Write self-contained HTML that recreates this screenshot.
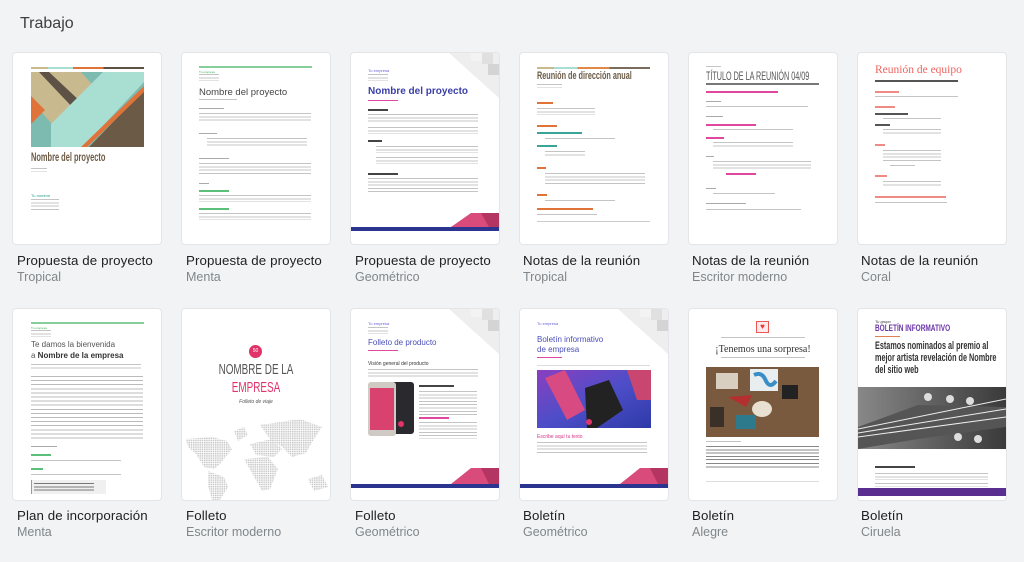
<!DOCTYPE html>
<html><head><meta charset="utf-8">
<style>
*{margin:0;padding:0;box-sizing:border-box}
body{width:1024px;height:562px;background:#f1f3f4;font-family:"Liberation Sans",sans-serif;position:relative;overflow:hidden}
.h{position:absolute;left:20px;top:15px;font-size:16px;color:#3c4043}
.c{position:absolute;width:148px;height:191px;background:#fff;border-radius:3px;box-shadow:0 0 0 1px #e3e5e8;overflow:hidden}
.c>*{position:absolute}
.t{position:absolute;font-size:13.3px;color:#202124;white-space:nowrap;letter-spacing:.1px}
.s{position:absolute;font-size:12.5px;color:#80868b;white-space:nowrap}
.p{background:repeating-linear-gradient(#c4c4c4 0 1px,transparent 1px 3.3px)}
.q{background:repeating-linear-gradient(#aaa 0 1px,transparent 1px 3.3px)}
.n{font-weight:bold;transform-origin:0 0;white-space:nowrap}
.x{font-size:3px;white-space:nowrap}
</style></head><body>
<div class="h">Trabajo</div>

<!-- Row 1 -->
<div class="c" style="left:13px;top:53px">
 <div style="left:18px;top:14px;width:113px;height:2px;background:linear-gradient(90deg,#c9b98f 0 15%,#a9dfd3 15% 37%,#e0733a 37% 64%,#5e5247 64%)"></div>
 <svg style="left:18px;top:19px" width="113" height="75" viewBox="0 0 113 75">
  <rect width="113" height="75" fill="#7dbab0"/>
  <polygon points="0,0 50,0 75,28 28,60 0,28" fill="#c9b98f"/>
  <polygon points="8,0 18,0 52,32 44,38" fill="#5e5247"/>
  <polygon points="0,24 14,38 0,52" fill="#e0733a"/>
  <polygon points="113,0 113,10 52,75 20,75 20,52 72,0" fill="#a9dfd3"/>
  <polygon points="113,18 113,75 58,75" fill="#6b5a45"/>
  <polygon points="113,14 113,20 56,75 50,75" fill="#e0733a"/>
 </svg>
 <div class="n" style="left:18px;top:97px;font-size:12px;color:#6b5a45;transform:scaleX(.62)">Nombre del proyecto</div>
 <div class="p" style="left:18px;top:115px;width:16px;height:4px"></div>
 <div class="x" style="left:18px;top:140px;color:#2aa08e;font-size:4px">Tu nombre</div>
 <div class="p" style="left:18px;top:146px;width:28px;height:11px"></div>
</div>

<div class="c" style="left:182px;top:53px">
 <div style="left:17px;top:13px;width:113px;height:2px;background:#86cf9b"></div>
 <div class="x" style="left:17px;top:17px;color:#3cb45a">Tu empresa</div>
 <div class="p" style="left:17px;top:21px;width:20px;height:7px"></div>
 <div style="left:17px;top:34px;font-size:9.5px;color:#444">Nombre del proyecto</div>
 <div class="p" style="left:17px;top:46px;width:38px;height:2px"></div>
 <div class="q" style="left:17px;top:55px;width:25px;height:2px"></div>
 <div class="p" style="left:17px;top:60px;width:112px;height:10px"></div>
 <div class="q" style="left:17px;top:80px;width:18px;height:2px"></div>
 <div class="p" style="left:25px;top:85px;width:100px;height:10px"></div>
 <div class="q" style="left:17px;top:105px;width:30px;height:2px"></div>
 <div class="p" style="left:17px;top:110px;width:112px;height:13px"></div>
 <div class="q" style="left:17px;top:130px;width:10px;height:2px"></div>
 <div style="left:17px;top:137px;width:30px;height:2px;background:#5cc07a"></div>
 <div class="p" style="left:17px;top:142px;width:112px;height:7px"></div>
 <div style="left:17px;top:155px;width:30px;height:2px;background:#5cc07a"></div>
 <div class="p" style="left:17px;top:160px;width:112px;height:7px"></div>
</div>

<div class="c" style="left:351px;top:53px">
 <svg style="left:98px;top:0" width="50" height="45"><polygon points="0,0 50,0 50,45" fill="#eeeeee"/><rect x="33" y="0" width="11" height="11" fill="#e0e0e0"/><rect x="39" y="11" width="11" height="11" fill="#d4d4d4"/><rect x="22" y="0" width="11" height="8" fill="#f3f3f3"/></svg>
 <div class="x" style="left:17px;top:15px;color:#6a5fd8;font-size:4px">Tu empresa</div>
 <div class="p" style="left:17px;top:21px;width:20px;height:7px"></div>
 <div style="left:17px;top:33px;font-size:10px;font-weight:bold;color:#3a3fa8">Nombre del proyecto</div>
 <div style="left:17px;top:47px;width:30px;height:1px;background:#e0479e"></div>
 <div class="q" style="left:17px;top:56px;width:20px;height:2px;background:#444"></div>
 <div class="p" style="left:17px;top:61px;width:110px;height:10px"></div>
 <div class="p" style="left:17px;top:74px;width:110px;height:7px"></div>
 <div style="left:17px;top:87px;width:14px;height:2px;background:#444"></div>
 <div class="p" style="left:25px;top:93px;width:102px;height:7px"></div>
 <div class="p" style="left:25px;top:104px;width:102px;height:7px"></div>
 <div style="left:17px;top:120px;width:30px;height:2px;background:#444"></div>
 <div class="p" style="left:17px;top:125px;width:110px;height:14px"></div>
 <svg style="left:0;top:160px" width="148" height="31"><polygon points="100,14 120,0 148,0 148,14" fill="#d94b7a"/><polygon points="130,0 148,0 148,14 138,14" fill="#b43562"/><rect x="0" y="14" width="148" height="4" fill="#2b3590"/></svg>
</div>

<div class="c" style="left:520px;top:53px">
 <div style="left:17px;top:14px;width:113px;height:2px;background:linear-gradient(90deg,#c9b98f 0 15%,#a9dfd3 15% 36%,#e0874a 36% 64%,#7a6c5c 64%)"></div>
 <div class="n" style="left:17px;top:17px;font-size:11px;color:#6b5a45;transform:scaleX(.66)">Reunión de dirección anual</div>
 <div class="p" style="left:17px;top:31px;width:25px;height:4px"></div>
 <div style="left:17px;top:49px;width:16px;height:2px;background:#e0733a"></div>
 <div class="p" style="left:17px;top:55px;width:58px;height:7px"></div>
 <div style="left:17px;top:72px;width:20px;height:2px;background:#e0733a"></div>
 <div style="left:17px;top:79px;width:45px;height:2px;background:#3aa596"></div>
 <div class="p" style="left:25px;top:85px;width:70px;height:2px"></div>
 <div style="left:17px;top:92px;width:20px;height:2px;background:#3aa596"></div>
 <div class="p" style="left:25px;top:98px;width:40px;height:6px"></div>
 <div style="left:17px;top:114px;width:9px;height:2px;background:#e0733a"></div>
 <div class="p" style="left:25px;top:120px;width:100px;height:12px"></div>
 <div style="left:17px;top:141px;width:10px;height:2px;background:#e0733a"></div>
 <div class="p" style="left:25px;top:147px;width:70px;height:2px"></div>
 <div style="left:17px;top:155px;width:56px;height:2px;background:#e0733a"></div>
 <div class="p" style="left:17px;top:161px;width:60px;height:2px"></div>
 <div style="left:17px;top:168px;width:113px;height:1px;background:#ccc"></div>
</div>

<div class="c" style="left:689px;top:53px">
 <div class="p" style="left:17px;top:13px;width:15px;height:2px"></div>
 <div class="n" style="left:17px;top:16px;font-size:12px;color:#555;font-weight:normal;transform:scaleX(.6)">TÍTULO DE LA REUNIÓN 04/09</div>
 <div style="left:17px;top:30px;width:113px;height:2px;background:#777"></div>
 <div style="left:17px;top:38px;width:72px;height:2px;background:#e0479e"></div>
 <div class="q" style="left:17px;top:48px;width:15px;height:2px"></div>
 <div class="p" style="left:17px;top:53px;width:102px;height:2px"></div>
 <div class="q" style="left:17px;top:63px;width:17px;height:2px"></div>
 <div style="left:17px;top:71px;width:50px;height:2px;background:#e0479e"></div>
 <div class="p" style="left:24px;top:76px;width:80px;height:2px"></div>
 <div style="left:17px;top:84px;width:18px;height:2px;background:#e0479e"></div>
 <div class="p" style="left:24px;top:89px;width:80px;height:6px"></div>
 <div class="q" style="left:17px;top:103px;width:8px;height:2px"></div>
 <div class="p" style="left:24px;top:108px;width:98px;height:9px"></div>
 <div style="left:37px;top:120px;width:30px;height:2px;background:#e0479e"></div>
 <div class="q" style="left:17px;top:135px;width:10px;height:2px"></div>
 <div class="p" style="left:24px;top:140px;width:62px;height:2px"></div>
 <div class="q" style="left:17px;top:150px;width:40px;height:2px"></div>
 <div class="p" style="left:17px;top:156px;width:95px;height:2px"></div>
</div>

<div class="c" style="left:858px;top:53px">
 <div style="left:17px;top:11px;font-family:'Liberation Serif',serif;font-size:11.5px;color:#ef6461">Reunión de equipo</div>
 <div style="left:17px;top:27px;width:83px;height:2px;background:#555"></div>
 <div style="left:17px;top:38px;width:24px;height:2px;background:#ef8a85"></div>
 <div class="p" style="left:17px;top:43px;width:83px;height:2px"></div>
 <div style="left:17px;top:53px;width:20px;height:2px;background:#ef8a85"></div>
 <div style="left:17px;top:60px;width:33px;height:2px;background:#555"></div>
 <div class="p" style="left:25px;top:65px;width:58px;height:2px"></div>
 <div style="left:17px;top:71px;width:15px;height:2px;background:#555"></div>
 <div class="p" style="left:25px;top:76px;width:58px;height:6px"></div>
 <div style="left:17px;top:91px;width:10px;height:2px;background:#ef8a85"></div>
 <div class="p" style="left:25px;top:97px;width:58px;height:12px"></div>
 <div class="p" style="left:32px;top:112px;width:25px;height:2px"></div>
 <div style="left:17px;top:122px;width:12px;height:2px;background:#ef8a85"></div>
 <div class="p" style="left:25px;top:128px;width:58px;height:6px"></div>
 <div style="left:17px;top:143px;width:71px;height:2px;background:#ef8a85"></div>
 <div class="p" style="left:17px;top:149px;width:72px;height:2px"></div>
</div>

<div class="t" style="left:17px;top:253px">Propuesta de proyecto</div><div class="s" style="left:17px;top:270px">Tropical</div>
<div class="t" style="left:186px;top:253px">Propuesta de proyecto</div><div class="s" style="left:186px;top:270px">Menta</div>
<div class="t" style="left:355px;top:253px">Propuesta de proyecto</div><div class="s" style="left:355px;top:270px">Geométrico</div>
<div class="t" style="left:523px;top:253px">Notas de la reunión</div><div class="s" style="left:523px;top:270px">Tropical</div>
<div class="t" style="left:692px;top:253px">Notas de la reunión</div><div class="s" style="left:692px;top:270px">Escritor moderno</div>
<div class="t" style="left:861px;top:253px">Notas de la reunión</div><div class="s" style="left:861px;top:270px">Coral</div>

<!-- Row 2 -->
<div class="c" style="left:13px;top:309px">
 <div style="left:18px;top:13px;width:113px;height:2px;background:#86cf9b"></div>
 <div class="x" style="left:18px;top:17px;color:#3cb45a">Tu empresa</div>
 <div class="p" style="left:18px;top:21px;width:20px;height:7px"></div>
 <div style="left:18px;top:31px;font-size:8px;color:#555">Te damos la bienvenida</div>
 <div style="left:18px;top:42px;font-size:8px;color:#555">a <b style="color:#333">Nombre de la empresa</b></div>
 <div class="p" style="left:18px;top:55px;width:110px;height:5px"></div>
 <div class="p" style="left:18px;top:67px;width:112px;height:63px;background:repeating-linear-gradient(#bbb 0 1px,transparent 1px 4.1px)"></div>
 <div class="q" style="left:18px;top:137px;width:26px;height:2px"></div>
 <div style="left:18px;top:145px;width:20px;height:2px;background:#5cc07a"></div>
 <div class="p" style="left:18px;top:151px;width:90px;height:2px"></div>
 <div style="left:18px;top:159px;width:12px;height:2px;background:#5cc07a"></div>
 <div class="p" style="left:18px;top:165px;width:90px;height:2px"></div>
 <div style="left:18px;top:171px;width:75px;height:14px;background:#f0f0f0;border-left:1px solid #5cc07a"></div>
 <div class="q" style="left:21px;top:174px;width:60px;height:8px;background:repeating-linear-gradient(#777 0 1px,transparent 1px 3.3px)"></div>
</div>

<div class="c" style="left:182px;top:309px">
 <div style="left:67px;top:36px;width:13px;height:13px;border-radius:50%;background:#e0336a;color:#fff;font-size:5px;text-align:center;line-height:13px">50</div>
 <div style="left:0;width:148px;text-align:center;top:52px;font-size:15px;color:#555;transform:scaleX(.66)">NOMBRE DE LA</div>
 <div style="left:0;width:148px;text-align:center;top:70px;font-size:15px;color:#e0336a;transform:scaleX(.66)">EMPRESA</div>
 <div style="left:0;width:148px;text-align:center;top:90px;font-size:5px;color:#555;font-style:italic">Folleto de viaje</div>
 <svg style="left:0;top:100px" width="148" height="91">
  <defs><pattern id="d" width="2.2" height="2.2" patternUnits="userSpaceOnUse"><rect width="1.5" height="1.5" fill="#c8c8c8"/></pattern></defs>
  <g fill="url(#d)">
   <path d="M4,30 L30,28 L45,32 L50,40 L38,55 L32,60 L22,58 L14,45 L6,38Z"/>
   <path d="M52,22 L62,18 L66,26 L56,32Z"/>
   <path d="M26,62 L42,68 L46,78 L38,91 L30,91 L26,76Z"/>
   <path d="M68,35 L90,30 L100,40 L92,48 L74,46Z"/>
   <path d="M62,50 L86,48 L96,60 L88,80 L80,82 L70,64Z"/>
   <path d="M78,16 L118,10 L140,18 L132,30 L124,44 L110,48 L100,38 L88,30Z"/>
   <path d="M126,70 L140,66 L146,78 L132,82Z"/>
  </g>
 </svg>
</div>

<div class="c" style="left:351px;top:309px">
 <svg style="left:98px;top:0" width="50" height="45"><polygon points="0,0 50,0 50,45" fill="#eeeeee"/><rect x="33" y="0" width="11" height="11" fill="#e0e0e0"/><rect x="39" y="11" width="11" height="11" fill="#d4d4d4"/><rect x="22" y="0" width="11" height="8" fill="#f3f3f3"/></svg>
 <div class="x" style="left:17px;top:12px;color:#6a5fd8;font-size:4px">Tu empresa</div>
 <div class="p" style="left:17px;top:18px;width:20px;height:7px"></div>
 <div style="left:17px;top:29px;font-size:8px;color:#4a4fb8">Folleto de producto</div>
 <div style="left:17px;top:41px;width:30px;height:1px;background:#e0479e"></div>
 <div style="left:17px;top:52px;font-size:5px;color:#333">Visión general del producto</div>
 <div class="p" style="left:17px;top:60px;width:110px;height:10px"></div>
 <svg style="left:17px;top:73px" width="48" height="56"><rect x="20" y="0" width="26" height="52" rx="3" fill="#2a2a2e"/><circle cx="33" cy="42" r="3" fill="#e0336a"/><rect x="0" y="0" width="28" height="54" rx="3" fill="#cfcac4"/><rect x="2" y="6" width="24" height="42" fill="#d9416e"/></svg>
 <div style="left:68px;top:76px;width:35px;height:2px;background:#444"></div>
 <div class="p" style="left:68px;top:82px;width:58px;height:24px"></div>
 <div style="left:68px;top:108px;width:30px;height:2px;background:#e0479e"></div>
 <div class="p" style="left:68px;top:113px;width:58px;height:17px"></div>
 <svg style="left:0;top:159px" width="148" height="32"><polygon points="100,16 120,0 148,0 148,16" fill="#d94b7a"/><polygon points="130,0 148,0 148,16 138,16" fill="#b43562"/><rect x="0" y="16" width="148" height="4" fill="#2b3590"/></svg>
</div>

<div class="c" style="left:520px;top:309px">
 <svg style="left:98px;top:0" width="50" height="45"><polygon points="0,0 50,0 50,45" fill="#eeeeee"/><rect x="33" y="0" width="11" height="11" fill="#e0e0e0"/><rect x="39" y="11" width="11" height="11" fill="#d4d4d4"/><rect x="22" y="0" width="11" height="8" fill="#f3f3f3"/></svg>
 <div class="x" style="left:17px;top:12px;color:#6a5fd8;font-size:4px">Tu empresa</div>
 <div style="left:17px;top:26px;font-size:8px;color:#4a4fb8;line-height:10px">Boletín informativo<br>de empresa</div>
 <div style="left:17px;top:48px;width:25px;height:1px;background:#e0479e"></div>
 <div style="left:17px;top:56px;width:113px;height:1px;background:#ddd"></div>
 <svg style="left:17px;top:61px" width="114" height="58"><defs><linearGradient id="g" x1="0" y1="0" x2="1" y2="1"><stop offset="0" stop-color="#8a3fc0"/><stop offset=".5" stop-color="#4d4ec8"/><stop offset="1" stop-color="#2e3aa8"/></linearGradient></defs><rect width="114" height="58" fill="url(#g)"/><polygon points="8,8 28,0 48,40 30,50" fill="#d84a82"/><polygon points="48,18 72,10 86,40 60,58 50,58" fill="#222"/><polygon points="90,0 114,0 114,30 100,30" fill="#c8466f"/><circle cx="52" cy="52" r="3" fill="#e0336a"/></svg>
 <div style="left:17px;top:125px;font-size:5px;color:#d8338a">Escribe aquí tu texto</div>
 <div class="p" style="left:17px;top:133px;width:110px;height:12px"></div>
 <svg style="left:0;top:159px" width="148" height="32"><polygon points="100,16 120,0 148,0 148,16" fill="#d94b7a"/><polygon points="130,0 148,0 148,16 138,16" fill="#b43562"/><rect x="0" y="16" width="148" height="4" fill="#2b3590"/></svg>
</div>

<div class="c" style="left:689px;top:309px">
 <div style="left:67px;top:12px;width:13px;height:12px;border:1px solid #e55;background:#fdeaea;color:#e33;font-size:8px;line-height:10px;text-align:center">♥</div>
 <div class="p" style="left:32px;top:28px;width:84px;height:2px"></div>
 <div style="left:0;width:148px;text-align:center;top:35px;font-family:'Liberation Serif',serif;font-size:10px;color:#333">¡Tenemos una sorpresa!</div>
 <div class="p" style="left:32px;top:48px;width:84px;height:2px"></div>
 <svg style="left:17px;top:58px" width="113" height="70"><rect width="113" height="70" fill="#7a5a3e"/><rect x="10" y="6" width="22" height="16" fill="#d8cfc0"/><rect x="44" y="2" width="28" height="22" fill="#e8eef0"/><path d="M48,8 q8,-4 12,6 q4,8 10,0" stroke="#3a8ec8" stroke-width="4" fill="none"/><rect x="76" y="18" width="16" height="14" fill="#222"/><polygon points="22,30 46,28 40,40" fill="#b43030"/><ellipse cx="56" cy="42" rx="10" ry="8" fill="#e8e0d0"/><rect x="30" y="48" width="20" height="14" fill="#2d7a8c"/><rect x="4" y="40" width="14" height="20" fill="#3a3028"/></svg>
 <div class="p" style="left:17px;top:132px;width:35px;height:2px"></div>
 <div class="p" style="left:17px;top:137px;width:113px;height:14px;background:repeating-linear-gradient(#888 0 1px,transparent 1px 3.3px)"></div>
 <div class="p" style="left:17px;top:154px;width:113px;height:6px;background:repeating-linear-gradient(#888 0 1px,transparent 1px 3.3px)"></div>
 <div style="left:17px;top:172px;width:113px;height:1px;background:#ddd"></div>
</div>

<div class="c" style="left:858px;top:309px">
 <div style="left:17px;top:10px;font-size:4px;font-style:italic;color:#333">Tu grupo</div>
 <div class="n" style="left:17px;top:14px;font-size:9px;color:#6b35a8;transform:scaleX(.72)">BOLETÍN INFORMATIVO</div>
 <div style="left:17px;top:27px;width:25px;height:1px;background:#e08050"></div>
 <div class="n" style="left:17px;top:31px;font-size:11px;color:#333;line-height:12.2px;transform:scaleX(.66)">Estamos nominados al premio al<br>mejor artista revelación de Nombre<br>del sitio web</div>
 <svg style="left:0;top:78px" width="148" height="62"><defs><linearGradient id="h" x1="0" x2="1"><stop offset="0" stop-color="#888"/><stop offset="1" stop-color="#3a3a3a"/></linearGradient></defs><rect width="148" height="62" fill="url(#h)"/><polygon points="0,40 60,18 148,20 148,40 60,52 0,62" fill="#555"/><g stroke="#eee" stroke-width="1"><line x1="0" y1="42" x2="148" y2="12"/><line x1="0" y1="46" x2="148" y2="22"/><line x1="0" y1="50" x2="148" y2="30"/></g><g fill="#ddd"><circle cx="70" cy="10" r="4"/><circle cx="92" cy="12" r="4"/><circle cx="112" cy="14" r="4"/><circle cx="100" cy="50" r="4"/><circle cx="120" cy="52" r="4"/></g></svg>
 <div style="left:17px;top:157px;width:40px;height:2px;background:#444"></div>
 <div class="p" style="left:17px;top:164px;width:113px;height:7px"></div>
 <div class="p" style="left:17px;top:174px;width:113px;height:4px"></div>
 <div style="left:0;top:179px;width:148px;height:8px;background:#5a2d91"></div>
</div>

<div class="t" style="left:17px;top:508px">Plan de incorporación</div><div class="s" style="left:17px;top:525px">Menta</div>
<div class="t" style="left:186px;top:508px">Folleto</div><div class="s" style="left:186px;top:525px">Escritor moderno</div>
<div class="t" style="left:355px;top:508px">Folleto</div><div class="s" style="left:355px;top:525px">Geométrico</div>
<div class="t" style="left:523px;top:508px">Boletín</div><div class="s" style="left:523px;top:525px">Geométrico</div>
<div class="t" style="left:692px;top:508px">Boletín</div><div class="s" style="left:692px;top:525px">Alegre</div>
<div class="t" style="left:861px;top:508px">Boletín</div><div class="s" style="left:861px;top:525px">Ciruela</div>
</body></html>
